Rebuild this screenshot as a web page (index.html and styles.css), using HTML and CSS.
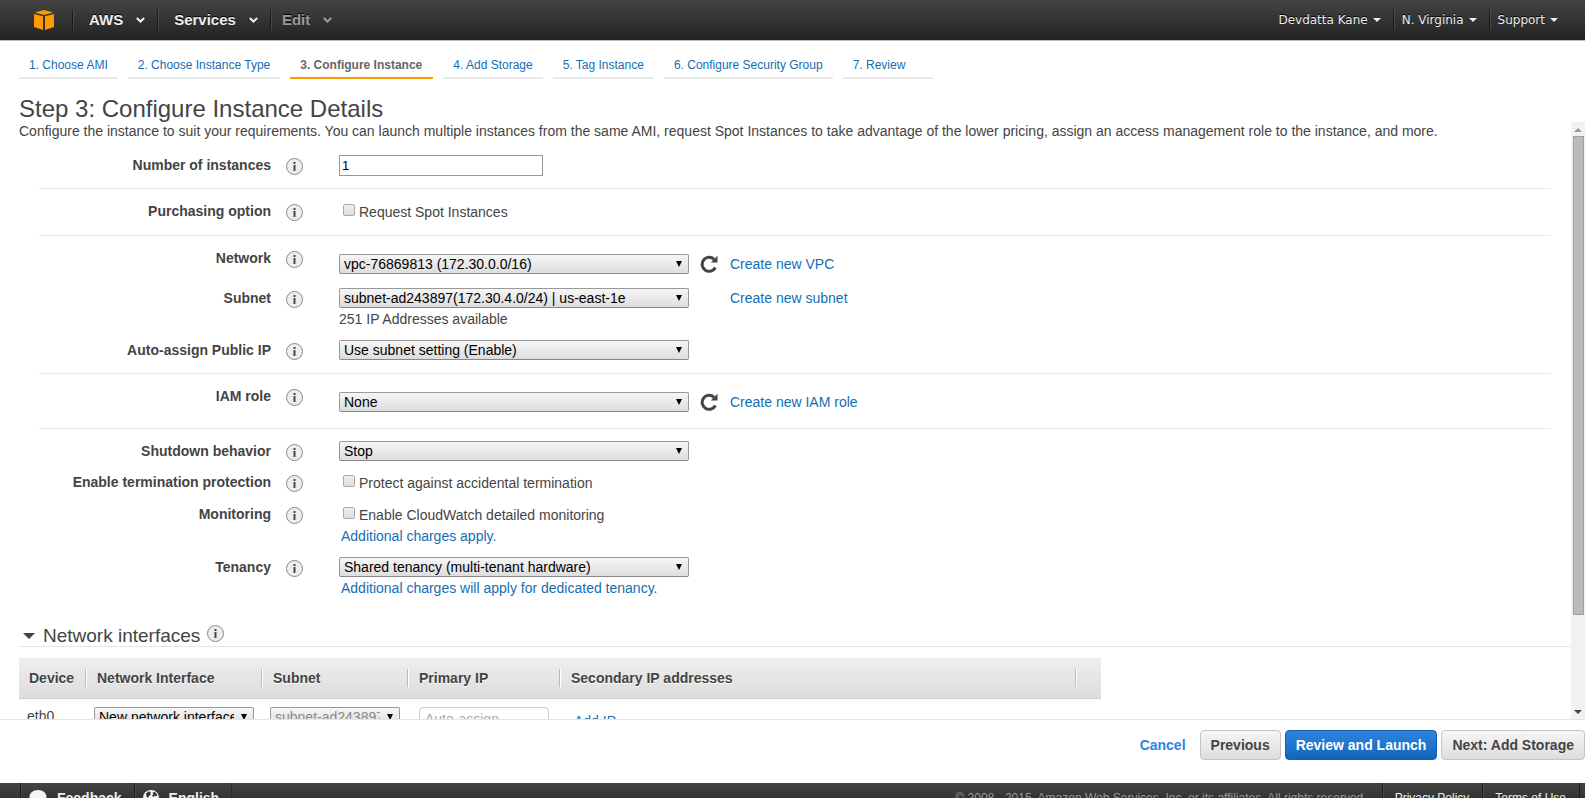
FILE: index.html
```html
<!DOCTYPE html>
<html lang="en">
<head>
<meta charset="utf-8">
<title>Step 3: Configure Instance Details</title>
<link rel="stylesheet" href="styles.css">
</head>
<body>
<svg class="sprite" aria-hidden="true">
  <symbol id="info" viewBox="0 0 17 17">
    <circle cx="8.500" cy="8.500" r="8" fill="#eee" stroke="#888"/>
    <path d="M7.500 4h2v2h-2zM7.500 7h2v6h-2z" fill="#444"/>
    <path d="M6.500 7h1v1h-1zM6.500 12h1v1h-1zM9.500 12h1v1h-1z" fill="#bbb"/>
  </symbol>
  <symbol id="chevron" viewBox="0 0 9 6">
    <path d="M.8 1l3.700 3.500L8.200 1" fill="none" stroke="currentColor" stroke-width="2"/>
  </symbol>
  <symbol id="refresh" viewBox="0 0 18 18">
    <path d="M14 4.300A7 7 0 1 0 15.400 12.500" fill="none" stroke="#444" stroke-width="3"/>
    <path d="M17.500 .8v6.700H10.800z" fill="#444"/>
  </symbol>
</svg>

<header class="topbar">
  <a class="logo" href="#" aria-label="Console home">
    <svg width="20" height="20" viewBox="0 0 20 20" fill="#f90">
      <path d="M10 0l9 2.500L10 5 1 2.500zM0 4l9 2.300V20l-9-3zM20 4l-9 2.300V20l9-3z"/>
    </svg>
  </a>
  <nav class="menu" aria-label="Main">
    <button type="button">AWS <svg class="chev"><use href="#chevron"/></svg></button>
    <button type="button">Services <svg class="chev"><use href="#chevron"/></svg></button>
    <button type="button" class="dim">Edit <svg class="chev"><use href="#chevron"/></svg></button>
  </nav>
  <nav class="account" aria-label="Account">
    <button type="button">Devdatta Kane</button>
    <button type="button">N. Virginia</button>
    <button type="button">Support</button>
  </nav>
</header>

<nav class="steps" aria-label="Steps">
  <a href="#">1. Choose AMI</a>
  <a href="#">2. Choose Instance Type</a>
  <a href="#" class="current" aria-current="step">3. Configure Instance</a>
  <a href="#">4. Add Storage</a>
  <a href="#">5. Tag Instance</a>
  <a href="#">6. Configure Security Group</a>
  <a href="#">7. Review</a>
</nav>

<h1>Step 3: Configure Instance Details</h1>

<main class="panel">
  <div class="content">
    <p class="intro">Configure the instance to suit your requirements. You can launch multiple instances from the same AMI, request Spot Instances to take advantage of the lower pricing, assign an access management role to the instance, and more.</p>

    <form class="form">
      <div class="group">
        <div class="row">
          <label for="count">Number of instances</label>
          <svg class="info"><use href="#info"/></svg>
          <div><input id="count" class="text count" type="text" value="1"></div>
        </div>
      </div>
      <div class="group">
        <div class="row">
          <span class="name">Purchasing option</span>
          <svg class="info"><use href="#info"/></svg>
          <label class="check"><input type="checkbox">Request Spot Instances</label>
        </div>
      </div>
      <div class="group">
        <div class="row">
          <label for="network">Network</label>
          <svg class="info"><use href="#info"/></svg>
          <div class="pick lowered">
            <span class="select"><select id="network"><option>vpc-76869813 (172.30.0.0/16)</option></select></span>
            <button type="button" class="reload" aria-label="Refresh networks"><svg><use href="#refresh"/></svg></button>
            <a href="#">Create new VPC</a>
          </div>
        </div>
        <div class="row">
          <label for="subnet">Subnet</label>
          <svg class="info"><use href="#info"/></svg>
          <div>
            <div class="pick">
              <span class="select"><select id="subnet"><option>subnet-ad243897(172.30.4.0/24) | us-east-1e</option></select></span>
              <span></span>
              <a href="#">Create new subnet</a>
            </div>
            <div class="help">251 IP Addresses available</div>
          </div>
        </div>
        <div class="row">
          <label for="publicip">Auto-assign Public IP</label>
          <svg class="info"><use href="#info"/></svg>
          <div class="pick"><span class="select"><select id="publicip"><option>Use subnet setting (Enable)</option></select></span></div>
        </div>
      </div>
      <div class="group">
        <div class="row">
          <label for="role">IAM role</label>
          <svg class="info"><use href="#info"/></svg>
          <div class="pick lowered">
            <span class="select"><select id="role"><option>None</option></select></span>
            <button type="button" class="reload" aria-label="Refresh roles"><svg><use href="#refresh"/></svg></button>
            <a href="#">Create new IAM role</a>
          </div>
        </div>
      </div>
      <div class="group">
        <div class="row">
          <label for="shutdown">Shutdown behavior</label>
          <svg class="info"><use href="#info"/></svg>
          <div class="pick"><span class="select"><select id="shutdown"><option>Stop</option></select></span></div>
        </div>
        <div class="row">
          <span class="name">Enable termination protection</span>
          <svg class="info"><use href="#info"/></svg>
          <label class="check"><input type="checkbox">Protect against accidental termination</label>
        </div>
        <div class="row">
          <span class="name">Monitoring</span>
          <svg class="info"><use href="#info"/></svg>
          <div>
            <label class="check"><input type="checkbox">Enable CloudWatch detailed monitoring</label>
            <div class="help"><a class="note" href="#">Additional charges apply.</a></div>
          </div>
        </div>
        <div class="row">
          <label for="tenancy">Tenancy</label>
          <svg class="info"><use href="#info"/></svg>
          <div>
            <div class="pick"><span class="select"><select id="tenancy"><option>Shared tenancy (multi-tenant hardware)</option></select></span></div>
            <div class="help"><a class="note" href="#">Additional charges will apply for dedicated tenancy.</a></div>
          </div>
        </div>
      </div>
    </form>

    <h2><span class="disclosure"></span>Network interfaces <svg class="info"><use href="#info"/></svg></h2>

    <table class="nics">
      <colgroup><col class="c1"><col class="c2"><col class="c3"><col class="c4"><col class="c5"><col class="c6"></colgroup>
      <thead>
        <tr>
          <th><div>Device</div></th>
          <th><div>Network Interface</div></th>
          <th><div>Subnet</div></th>
          <th><div>Primary IP</div></th>
          <th><div>Secondary IP addresses</div></th>
          <th></th>
        </tr>
      </thead>
      <tbody>
        <tr>
          <td>eth0</td>
          <td><span class="select"><select aria-label="Network interface"><option>New network interface</option></select></span></td>
          <td><span class="select"><select aria-label="Interface subnet" disabled><option>subnet-ad243897</option></select></span></td>
          <td class="ip"><input class="text auto" type="text" placeholder="Auto-assign" aria-label="Primary IP"></td>
          <td class="add"><a href="#">Add IP</a></td>
          <td></td>
        </tr>
      </tbody>
    </table>
  </div>
  <div class="scrollbar" aria-hidden="true"><i class="up"></i><div class="track"><div class="thumb"></div></div><i class="down"></i></div>
</main>

<div class="actions">
  <a href="#">Cancel</a>
  <button type="button">Previous</button>
  <button type="button" class="primary">Review and Launch</button>
  <button type="button">Next: Add Storage</button>
</div>

<footer class="footer">
  <button type="button" class="tool">
    <svg width="18" height="16" viewBox="0 0 18 16"><path d="M9 0c5 0 8.500 3 8.500 6.800S14 13.500 9 13.500c-1 0-2-.1-3-.4L2 15.500l.8-4C1.200 10.200.5 8.600.5 6.800.5 3 4 0 9 0z" fill="#f4f4f4"/></svg>
    Feedback</button>
  <button type="button" class="tool">
    <svg width="16" height="16" viewBox="0 0 16 16"><circle cx="8" cy="8" r="8" fill="#f4f4f4"/><path d="M3 3.500L5.500 1.500 8 2 7 3.500l1 1L6 6 5 8 3.500 6.500zM9.500 2.500L12 2l2.500 3-1.500 1.500-1-1L10.500 7 9 5.500l1.500-1.500z" fill="#333"/></svg>
    English</button>
  <span class="copy">© 2008 - 2015, Amazon Web Services, Inc. or its affiliates. All rights reserved.</span>
  <a href="#">Privacy Policy</a>
  <a href="#">Terms of Use</a>
</footer>
</body>
</html>
```

FILE: styles.css
```css
* { box-sizing: border-box; }

body {
  margin: 0;
  height: 100vh;
  display: flex;
  flex-direction: column;
  overflow: hidden;
  background: #fff;
  color: #444;
  font: 14px/20px "Liberation Sans", Arial, sans-serif;
}

button, input, select { font: inherit; color: inherit; margin: 0; }
a { color: #146eb4; text-decoration: none; }
.sprite { display: none; }

/* Top bar */
.topbar {
  flex: none;
  height: 41px;
  display: flex;
  align-items: center;
  border-bottom: 1px solid #bbb;
  background: linear-gradient(#444, #222);
}
.topbar button {
  display: flex;
  align-items: center;
  height: 20px;
  padding: 0;
  border: 0;
  background: none;
  text-shadow: 0 -1px 0 #000;
}
.logo { display: flex; padding: 0 18px 0 34px; }
.menu { display: flex; }
.menu button {
  gap: 13px;
  padding: 0 12px 0 16px;
  border-left: 1px solid #1a1a1a;
  box-shadow: inset 1px 0 #4a4a4a;
  color: #eee;
  font-size: 15px;
  font-weight: bold;
}
.menu .dim { padding-left: 11px; color: #999; }
.chev { width: 9px; height: 6px; }
.account { display: flex; margin-left: auto; padding-right: 15px; }
.account button {
  gap: 5px;
  padding: 0 12px 0 8px;
  border-left: 1px solid #1a1a1a;
  box-shadow: inset 1px 0 #4a4a4a;
  color: #eee;
  font-family: "DejaVu Sans", Verdana, sans-serif;
  font-size: 12px;
}
.account button:first-child { border: 0; box-shadow: none; }
.account button::after {
  content: "";
  border: 4px solid transparent;
  border-top-color: #eee;
  border-bottom: 0;
}

/* Wizard steps */
.steps {
  flex: none;
  display: flex;
  gap: 10px;
  padding: 14px 19px 0;
  font-size: 12px;
}
.steps a {
  min-width: 90px;
  padding: 0 10px 2px;
  border-bottom: 2px solid #eaeaea;
}
.steps .current { padding-right: 11px; border-color: #f90; color: #666; font-weight: bold; }

h1 {
  flex: none;
  margin: 16px 19px 0;
  font-size: 24px;
  font-weight: normal;
  line-height: 27px;
}

/* Scrolling panel */
.panel {
  flex: 1;
  min-height: 0;
  display: flex;
  border-bottom: 1px solid #e5e5e5;
}
.content { flex: 1; min-width: 0; padding-left: 19px; overflow: hidden; }
.intro { margin: 0; line-height: 18px; }
.form { padding: 3px 20px 0; }
.group {
  display: flex;
  flex-direction: column;
  gap: 11px;
  padding: 12px 0 13px;
  border-bottom: 1px solid #eaeaea;
}
.group:last-child { border: 0; }
.row {
  display: grid;
  grid-template-columns: 232px 17px 1fr;
  column-gap: 15px;
  align-items: start;
}
.row > label:first-child, .name { font-weight: bold; text-align: right; }
.info { width: 17px; height: 17px; }
.row > .info { margin-top: 3px; }
.row > :nth-child(3) { margin-left: 21px; }

.text { border: 1px solid #999; padding: 0 2px; color: #000; background: #fff; }
.count { display: block; width: 204px; height: 21px; margin-bottom: -1px; font-size: 13px; }

.check { display: flex; gap: 4px; height: 21px; padding-left: 4px; line-height: 23px; }
.check input {
  appearance: none;
  width: 12px;
  height: 12px;
  margin-top: 3px;
  border: 1px solid #aaa;
  border-radius: 2px;
  background: linear-gradient(#eee, #ddd);
}

.pick {
  display: grid;
  grid-template-columns: 350px 19px auto;
  justify-content: start;
  align-items: center;
  column-gap: 11px;
  height: 20px;
}
.lowered { margin: 6px 0 3px; }
.help { margin-top: 1px; }
.note { padding-left: 2px; }
.reload { width: 18px; height: 18px; padding: 0; border: 0; background: none; }
.reload svg { display: block; width: 18px; height: 18px; }

.select { position: relative; display: block; }
.select select {
  appearance: none;
  display: block;
  width: 100%;
  height: 20px;
  padding: 0 19px 0 4px;
  border: 1px solid #999;
  border-bottom-color: #888;
  border-radius: 2px;
  background: linear-gradient(#f6f6f6, #ddd);
  color: #000;
  line-height: 18px;
}
.select select:disabled { color: #888; opacity: 1; }
.select::after {
  content: "";
  position: absolute;
  top: 7px;
  right: 7px;
  border: 3px solid transparent;
  border-top: 6px solid #000;
  border-bottom: 0;
}

/* Network interfaces */
h2 {
  display: flex;
  align-items: center;
  margin: 11px 0;
  padding: 3px 0 0 4px;
  border-bottom: 1px solid #e5e5e5;
  font-size: 19px;
  font-weight: normal;
  line-height: 20px;
}
h2 .info { margin: 0 0 4px 7px; }
.disclosure {
  margin-right: 8px;
  border: 6px solid transparent;
  border-top-color: #444;
  border-bottom: 0;
}
.nics { width: 1082px; table-layout: fixed; border-collapse: collapse; }
.c1 { width: 67px; }
.c2 { width: 176px; }
.c3 { width: 146px; }
.c4 { width: 152px; }
.c5 { width: 516px; }
.nics thead { background: linear-gradient(#eee, #ddd); }
.nics th { height: 40px; padding: 0; border-bottom: 1px solid #ccc; text-align: left; }
.nics th div {
  height: 18px;
  padding-left: 11px;
  border-right: 1px solid #bbb;
  box-shadow: 1px 0 #fff;
  line-height: 18px;
  text-shadow: 0 1px 0 #fff;
}
.nics th:first-child div { padding-left: 10px; }
.nics td { padding: 8px 8px 0; vertical-align: top; line-height: 18px; }
.nics .ip { padding-left: 11px; }
.nics .add { padding: 13px 14px 0; }
.auto { display: block; width: 130px; height: 24px; padding: 0 5px; border-color: #ccc; border-radius: 4px; }
.auto::placeholder { color: #aaa; }

.scrollbar {
  flex: none;
  width: 14px;
  display: flex;
  flex-direction: column;
  align-items: center;
  background: #f1f1f1;
}
.scrollbar i { border: 4px solid transparent; }
.scrollbar .up { margin: 6px 0 4px; border-bottom-color: #999; border-top: 0; }
.track { flex: 1; width: 100%; padding: 0 1px 0 2px; }
.thumb { height: 84%; border: 1px solid #a0a0a0; background: #bbb; }
.scrollbar .down { margin: 4px 0 1px; border-top-color: #444; }

/* Wizard buttons */
.actions {
  flex: none;
  display: flex;
  justify-content: flex-end;
  align-items: center;
  gap: 4px;
  padding: 10px 0 23px;
  font-weight: bold;
}
.actions a { margin-right: 10px; color: #2a85e0; }
.actions button {
  height: 30px;
  padding: 0 10px;
  border: 1px solid #c4c4c4;
  border-radius: 4px;
  background: linear-gradient(#f6f6f6, #ddd);
}
.actions .primary {
  border-color: #1160b0;
  background: linear-gradient(#2f85dd, #1166bb);
  color: #fff;
}

/* Footer runs past the bottom edge of the window */
.footer {
  flex: none;
  height: 30px;
  margin-bottom: -15px;
  padding-left: 20px;
  display: flex;
  align-items: center;
  background: linear-gradient(#444, #222);
  color: #999;
  font-size: 12px;
}
.tool {
  display: flex;
  align-items: center;
  gap: 10px;
  height: 30px;
  padding: 0 12px 0 8px;
  border: 0;
  border-left: 1px solid #1a1a1a;
  box-shadow: inset 1px 0 #4a4a4a;
  background: none;
  color: #eee;
  font-size: 14px;
  font-weight: bold;
}
.tool:nth-child(2) { border-right: 1px solid #2a2a2a; }
.copy { margin: 0 15px 0 auto; }
.footer a {
  height: 30px;
  padding: 0 13px 0 12px;
  border-left: 1px solid #1a1a1a;
  box-shadow: inset 1px 0 #4a4a4a;
  color: #eee;
  line-height: 30px;
}
.footer a:last-child { margin-right: 5px; border-right: 1px solid #1a1a1a; }
```
